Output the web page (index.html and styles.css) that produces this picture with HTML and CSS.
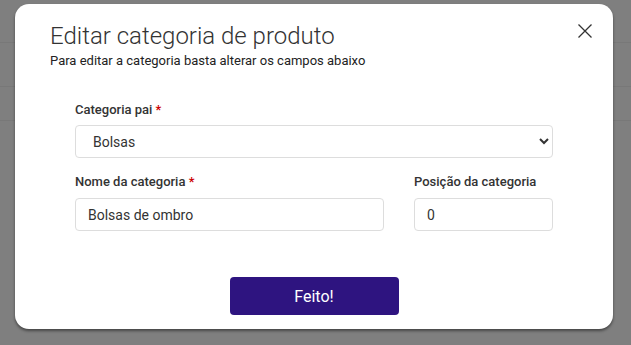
FILE: index.html
```html
<!DOCTYPE html>
<html lang="pt">
<head>
<meta charset="utf-8">
<link rel="stylesheet" href="styles.css">
</head>
<body>
<div class="backdrop">
  <div class="bg-line l1"></div>
  <div class="bg-line l2"></div>
  <div class="bg-line l3"></div>
  <div class="modal">
    <button class="close" aria-label="Fechar">
      <svg width="16" height="16" viewBox="0 0 16 16"><path d="M1.5 1.5 L14.5 14.5 M14.5 1.5 L1.5 14.5" stroke="#333" stroke-width="1.3" fill="none"/></svg>
    </button>
    <div class="header">
      <h1 class="title">Editar categoria de produto</h1>
      <p class="subtitle">Para editar a categoria basta alterar os campos abaixo</p>
    </div>
    <form class="form">
      <div class="field">
        <label class="label first">Categoria pai <span class="req">*</span></label>
        <select class="control select">
          <option>Bolsas</option>
        </select>
      </div>
      <div class="row">
        <div class="field">
          <label class="label">Nome da categoria <span class="req">*</span></label>
          <input class="control" type="text" value="Bolsas de ombro">
        </div>
        <div class="field">
          <label class="label">Posição da categoria</label>
          <input class="control" type="text" value="0">
        </div>
      </div>
      <div class="actions">
        <button type="button" class="btn">Feito!</button>
      </div>
    </form>
  </div>
</div>
</body>
</html>
```
FILE: styles.css
```css
* { box-sizing: border-box; }
html, body { margin: 0; padding: 0; }
body {
  width: 631px;
  height: 345px;
  overflow: hidden;
  font-family: Roboto, "Liberation Sans", sans-serif;
  background: #7f7f7f;
}
.backdrop {
  position: relative;
  width: 631px;
  height: 345px;
  padding: 4px 18px 0 15px;
  background: #7f7f7f;
}
.bg-line {
  position: absolute;
  left: 0;
  right: 0;
  height: 1px;
  background: #787878;
}
.l1 { top: 42px; }
.l2 { top: 86px; }
.l3 { top: 120px; }
.modal {
  position: relative;
  width: 598px;
  height: 325px;
  background: #fff;
  border-radius: 14px;
  box-shadow: 0 2px 3px rgba(0,0,0,0.45);
  padding: 18px 60px 0 60px;
}
.close {
  position: absolute;
  top: 19px;
  right: 20px;
  width: 16px;
  height: 16px;
  padding: 0;
  border: 0;
  background: none;
  display: flex;
}
.header {
  margin-left: -25px;
}
.title {
  margin: 0;
  font-weight: 300;
  font-size: 24px;
  line-height: 28px;
  color: #333;
}
.subtitle {
  margin: 3px 0 0;
  font-size: 13px;
  line-height: 16px;
  color: #222;
}
.form {
  margin-top: 33px;
  display: flex;
  flex-direction: column;
}
.field {
  display: flex;
  flex-direction: column;
}
.label {
  font-size: 13px;
  font-weight: 500;
  color: #333;
  line-height: 16px;
  margin-bottom: 8px;
}
.label.first { margin-bottom: 7px; }
.req { color: #c00; }
.control {
  height: 33px;
  border: 1px solid #ddd;
  border-radius: 4px;
  padding: 0 12px;
  font-family: Roboto, "Liberation Sans", sans-serif;
  font-size: 14px;
  color: #333;
  background: #fff;
  outline: none;
}
.select {
  padding-left: 13px;
}
.row {
  margin-top: 16px;
  display: grid;
  grid-template-columns: 309px 139px;
  gap: 30px;
}
.actions {
  margin-top: 46px;
  display: flex;
  justify-content: center;
}
.btn {
  width: 169px;
  height: 38px;
  border: 0;
  border-radius: 4px;
  background: #2e1480;
  color: #fff;
  font-family: Roboto, "Liberation Sans", sans-serif;
  font-size: 16px;
}
```
